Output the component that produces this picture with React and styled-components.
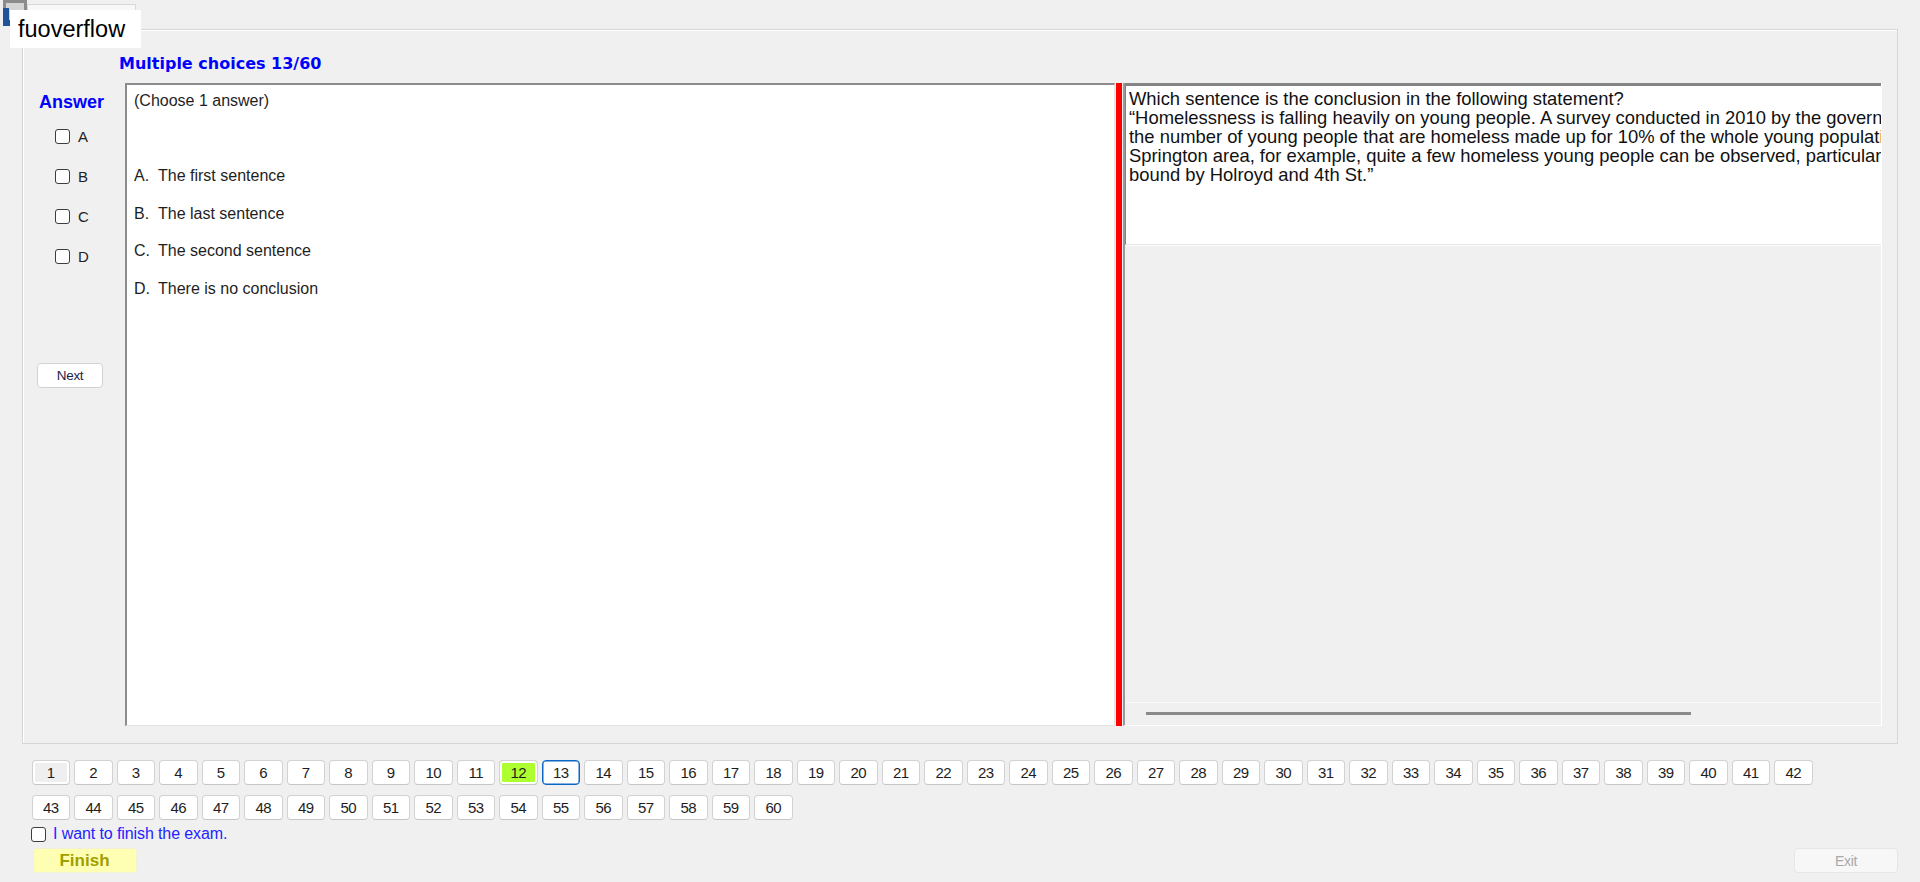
import React from 'react';
import styled, { createGlobalStyle } from 'styled-components';

const GlobalStyle = createGlobalStyle`
  html, body {
    margin: 0;
    padding: 0;
    background: #f0f0f0;
  }
  body {
    font-family: "Liberation Sans", Arial, sans-serif;
    color: #1a1a1a;
  }
  * {
    box-sizing: border-box;
  }
`;

const ANSWER_KEYS = ['A', 'B', 'C', 'D'];

const OPTIONS = [
  { key: 'A.', text: 'The first sentence' },
  { key: 'B.', text: 'The last sentence' },
  { key: 'C.', text: 'The second sentence' },
  { key: 'D.', text: 'There is no conclusion' },
];

const PASSAGE = [
  'Which sentence is the conclusion in the following statement?',
  '\u201cHomelessness is falling heavily on young people. A survey conducted in 2010 by the government revealed that',
  'the number of young people that are homeless made up for 10% of the whole young population. In the',
  'Springton area, for example, quite a few homeless young people can be observed, particularly in the area',
  'bound by Holroyd and 4th St.\u201d',
];

const QUESTIONS = Array.from({ length: 60 }, (_, i) => i + 1);
const CURRENT = 13;
const ANSWERED = [12];
const VISITED = [1];

const navState = (n) => {
  if (n === CURRENT) return 'current';
  if (ANSWERED.includes(n)) return 'answered';
  if (VISITED.includes(n)) return 'visited';
  return 'idle';
};

const AppIcon = () => (
  <IconHolder>
    <svg width="27" height="27" viewBox="0 0 27 27">
      <rect x="3" y="0" width="24" height="24" fill="#8b8b8b" />
      <rect x="6" y="3" width="18" height="18" fill="#d4d4d4" />
      <path d="M3 8 H9 V20 H20 V26 H3 Z" fill="#1f5596" />
    </svg>
  </IconHolder>
);

export default function App() {
  return (
    <Page>
      <GlobalStyle />
      <AppIcon />
      <TitleTab />
      <Watermark>fuoverflow</Watermark>

      <GroupPanel>
        <Heading>Multiple choices 13/60</Heading>
        <Workspace>
          <AnswerColumn>
            <AnswerLabel>Answer</AnswerLabel>
            <ChoiceList>
              {ANSWER_KEYS.map((k) => (
                <ChoiceRow key={k}>
                  <CheckBox />
                  <ChoiceLetter>{k}</ChoiceLetter>
                </ChoiceRow>
              ))}
            </ChoiceList>
            <NextButton>Next</NextButton>
          </AnswerColumn>

          <QuestionBox>
            <Prompt>(Choose 1 answer)</Prompt>
            <OptionList>
              {OPTIONS.map((o) => (
                <OptionRow key={o.key}>
                  <OptionKey>{o.key}</OptionKey>
                  <span>{o.text}</span>
                </OptionRow>
              ))}
            </OptionList>
          </QuestionBox>

          <Splitter />

          <RightPane>
            <PassageBox>
              {PASSAGE.map((line, i) => (
                <PassageLine key={i}>{line}</PassageLine>
              ))}
            </PassageBox>
            <LowerArea />
            <ScrollTrack>
              <ScrollThumb />
            </ScrollTrack>
          </RightPane>
        </Workspace>
      </GroupPanel>

      <Footer>
        <NumberGrid>
          {QUESTIONS.map((n) => (
            <NavButton key={n} $state={navState(n)}>
              {n}
            </NavButton>
          ))}
        </NumberGrid>
        <FinishCheckRow>
          <CheckBox />
          <FinishLabel>I want to finish the exam.</FinishLabel>
        </FinishCheckRow>
        <Actions>
          <FinishButton>Finish</FinishButton>
          <ExitButton>Exit</ExitButton>
        </Actions>
      </Footer>
    </Page>
  );
}

const Page = styled.div`
  position: relative;
  width: 1920px;
  height: 882px;
  overflow: hidden;
  padding: 29px 22px 0 22px;
`;

const IconHolder = styled.div`
  position: absolute;
  left: 0;
  top: 0;
  width: 27px;
  height: 27px;
  line-height: 0;
`;

const TitleTab = styled.div`
  position: absolute;
  left: 27px;
  top: 4px;
  width: 109px;
  height: 20px;
  background: #f8f8f8;
  border: 1px solid #d9d9d9;
`;

const Watermark = styled.div`
  position: absolute;
  left: 10px;
  top: 10px;
  width: 131px;
  height: 38px;
  padding-left: 8px;
  background: #ffffff;
  color: #000;
  font-family: "Liberation Sans", Arial, sans-serif;
  font-size: 23.5px;
  line-height: 38px;
  z-index: 2;
`;

const GroupPanel = styled.section`
  height: 715px;
  border: 1px solid #d6d6d6;
  box-shadow: inset 1px 1px 0 #ffffff;
  padding: 23px 15px 17px 0;
  display: flex;
  flex-direction: column;
`;

const Heading = styled.h1`
  margin: 0 0 8px 96px;
  font-family: "DejaVu Sans", Verdana, sans-serif;
  font-weight: bold;
  font-size: 16px;
  line-height: 22px;
  color: #0000ff;
`;

const Workspace = styled.div`
  display: flex;
  height: 643px;
  min-width: 0;
`;

const AnswerColumn = styled.div`
  width: 102px;
  flex-shrink: 0;
  padding: 8px 0 0 16px;
  display: flex;
  flex-direction: column;
  align-items: flex-start;
`;

const AnswerLabel = styled.div`
  font-weight: bold;
  font-size: 18px;
  line-height: 22px;
  color: #0000ff;
`;

const ChoiceList = styled.div`
  margin-top: 3px;
  display: flex;
  flex-direction: column;
`;

const ChoiceRow = styled.label`
  height: 40px;
  padding-left: 16px;
  display: flex;
  align-items: center;
  gap: 8px;
`;

const CheckBox = styled.span`
  display: inline-block;
  width: 15px;
  height: 15px;
  flex-shrink: 0;
  border: 1.5px solid #3d3d3d;
  border-radius: 3px;
  background: #ffffff;
`;

const ChoiceLetter = styled.span`
  font-size: 15px;
  color: #222;
`;

const NextButton = styled.button`
  margin: 87px 0 0 -2px;
  width: 66px;
  height: 25px;
  padding: 0;
  background: #ffffff;
  border: 1px solid #d3d3d3;
  border-radius: 4px;
  font-family: "Liberation Sans", Arial, sans-serif;
  font-size: 13.5px;
  letter-spacing: -0.3px;
  color: #1c1c4a;
`;

const QuestionBox = styled.div`
  width: 990px;
  flex-shrink: 0;
  background: #ffffff;
  border-top: 2px solid #8c8c8c;
  border-left: 2px solid #8c8c8c;
  border-right: 1px solid #e3e3e3;
  border-bottom: 1px solid #e3e3e3;
  padding: 6px 0 0 7px;
  font-size: 16px;
  color: #1e1e1e;
`;

const Prompt = styled.div`
  line-height: 20px;
`;

const OptionList = styled.div`
  margin-top: 46px;
`;

const OptionRow = styled.div`
  height: 37.5px;
  line-height: 37.5px;
  display: flex;
`;

const OptionKey = styled.span`
  width: 24px;
`;

const Splitter = styled.div`
  width: 6px;
  flex-shrink: 0;
  margin: 0 1px;
  background: #ff0000;
`;

const RightPane = styled.div`
  flex: 1;
  min-width: 0;
  overflow: hidden;
  display: flex;
  flex-direction: column;
  border-left: 2px solid #9a9a9a;
  border-right: 1px solid #ffffff;
  border-bottom: 1px solid #ffffff;
`;

const PassageBox = styled.div`
  height: 162px;
  flex-shrink: 0;
  background: #ffffff;
  border-top: 3px solid #858585;
  border-left: 1px solid #808080;
  border-bottom: 1px solid #e6e6e6;
  padding: 3px 0 0 3px;
  overflow: hidden;
  font-size: 18.4px;
  line-height: 19px;
  color: #111;
`;

const PassageLine = styled.div`
  white-space: pre;
`;

const LowerArea = styled.div`
  flex: 1;
  background: #f0f0f0;
  border-top: 1px solid #fbfbfb;
`;

const ScrollTrack = styled.div`
  height: 23px;
  flex-shrink: 0;
  border-top: 1px solid #fafafa;
  padding: 9px 0 0 21px;
`;

const ScrollThumb = styled.div`
  width: 545px;
  height: 3px;
  background: #8a8a8a;
`;

const Footer = styled.div`
  margin: 16px 0 0 9.5px;
`;

const NumberGrid = styled.div`
  display: grid;
  grid-template-columns: repeat(42, 38.5px);
  grid-auto-rows: 25px;
  column-gap: 4px;
  row-gap: 10px;
`;

const navBg = {
  idle: '#ffffff',
  visited: '#efefef',
  answered: '#adff2f',
  current: '#ffffff',
};

const NavButton = styled.button`
  padding: 0;
  background: ${({ $state }) => navBg[$state]};
  border: 1px solid ${({ $state }) => ($state === 'current' ? '#0a67c4' : '#d2d2d2')};
  border-bottom-color: ${({ $state }) => ($state === 'current' ? '#0a67c4' : '#c6c6c6')};
  border-radius: 4px;
  box-shadow: ${({ $state }) =>
    $state === 'answered' || $state === 'visited'
      ? 'inset 0 0 0 2px #ffffff'
      : $state === 'current'
      ? 'inset 0 0 0 0.5px #0a67c4'
      : 'none'};
  font-family: "Liberation Sans", Arial, sans-serif;
  font-size: 15px;
  letter-spacing: -0.5px;
  color: #1e1e1e;
`;

const FinishCheckRow = styled.label`
  margin: 4px 0 0 -1px;
  height: 20px;
  display: flex;
  align-items: center;
  gap: 7.5px;
`;

const FinishLabel = styled.span`
  font-size: 16px;
  letter-spacing: -0.1px;
  color: #2323ff;
`;

const Actions = styled.div`
  margin-top: 4px;
  display: flex;
  justify-content: space-between;
`;

const FinishButton = styled.button`
  margin-left: 1px;
  width: 104px;
  height: 25px;
  padding: 0;
  background: #ffffb4;
  border: 1px solid #f1f1d6;
  border-radius: 3px;
  font-family: "Liberation Sans", Arial, sans-serif;
  font-weight: bold;
  font-size: 17px;
  color: #9f9f00;
`;

const ExitButton = styled.button`
  width: 104px;
  height: 25px;
  padding: 0;
  background: #f7f7f7;
  border: 1px solid #e6e6e6;
  border-radius: 4px;
  font-family: "Liberation Sans", Arial, sans-serif;
  font-size: 14px;
  letter-spacing: -0.3px;
  color: #a9a9a9;
`;
